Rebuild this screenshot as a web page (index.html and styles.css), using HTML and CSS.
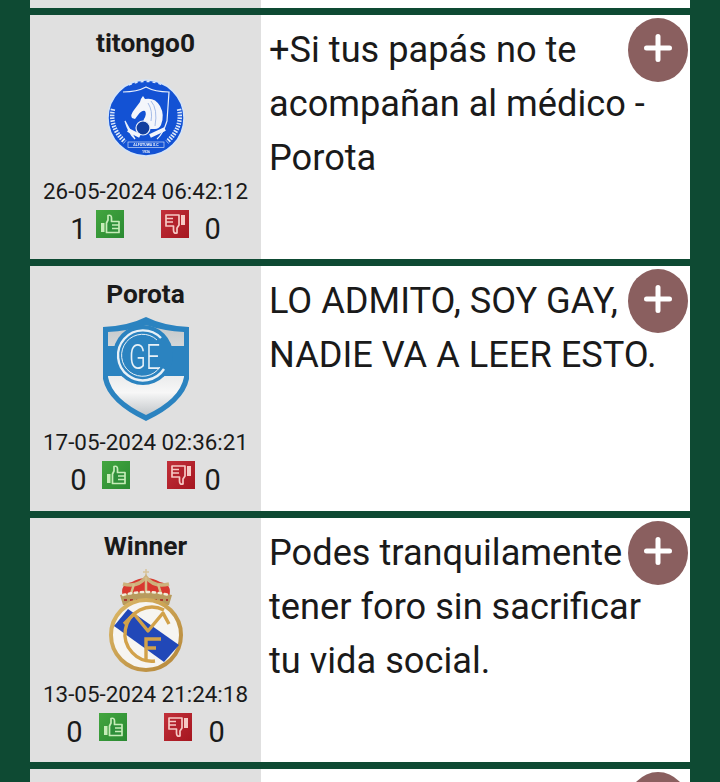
FILE: index.html
```html
<!DOCTYPE html>
<html lang="es">
<head>
    <meta charset="UTF-8">
    <meta name="viewport" content="width=device-width, initial-scale=1.0">
    <title>Foro</title>
    <link rel="stylesheet" href="styles.css">
</head>
<body>

    <!-- Shared icons -->
    <svg class="defs" width="0" height="0">
        <defs>
            <linearGradient id="green-bg" x1="0" y1="0" x2="1" y2="1">
                <stop offset="0" stop-color="#43a63f"/>
                <stop offset="1" stop-color="#2a8a32"/>
            </linearGradient>
            <linearGradient id="red-bg" x1="0" y1="0" x2="1" y2="1">
                <stop offset="0" stop-color="#c2303a"/>
                <stop offset="1" stop-color="#a5161f"/>
            </linearGradient>
            <linearGradient id="silver" x1="0" y1="0" x2="0" y2="1">
                <stop offset="0" stop-color="#c4c8ca"/>
                <stop offset="0.75" stop-color="#f7f7f7"/>
                <stop offset="1" stop-color="#c4c8cb"/>
            </linearGradient>
            <linearGradient id="gold" x1="0" y1="0" x2="1" y2="1">
                <stop offset="0" stop-color="#dcb867"/>
                <stop offset="1" stop-color="#b5873a"/>
            </linearGradient>
            <symbol id="thumb-up" viewBox="0 0 28 28">
                <rect width="28" height="28" fill="url(#green-bg)"/>
                <path d="M10.5 13 L12 10 V5.5 Q15.5 4.5 15.5 8 V11.5 H23 V22.5 H10.5 Z" fill="#2f8f3a" stroke="#c6ecb8" stroke-width="1.7" stroke-linejoin="round"/>
                <path d="M5 13 H8.5 V22 H5 Z" fill="#c6ecb8"/>
                <path d="M16 15 H23 M16 18.5 H23" stroke="#c6ecb8" stroke-width="1.4"/>
            </symbol>
            <symbol id="thumb-down" viewBox="0 0 28 28">
                <rect width="28" height="28" fill="url(#red-bg)"/>
                <path d="M5 5 H18 V15 L16 18 V23 Q12.5 24 12.5 20 V16 H5 Z" fill="#b3222c" stroke="#f6c9c4" stroke-width="1.7" stroke-linejoin="round"/>
                <path d="M20 5 H24 V15 H20 Z" fill="#f6c9c4"/>
                <path d="M5 8.5 H12 M5 12 H12" stroke="#f6c9c4" stroke-width="1.4"/>
            </symbol>
            <symbol id="plus" viewBox="0 0 28 28">
                <path d="M14 2.5 V25.5 M2.5 14 H25.5" stroke="#fff" stroke-width="5" stroke-linecap="round"/>
            </symbol>
        </defs>
    </svg>

    <div class="thread">

        <!-- Row cut off by the top of the screen -->
        <div class="post post-cut"><div class="author"></div><div class="body"></div></div>

        <div class="post">
            <div class="author">
                <div class="name">titongo0</div>
                <div class="crest">
                    <svg width="78" height="78" viewBox="0 0 78 78">
                        <circle cx="39" cy="39" r="38" fill="#1352d4" stroke="#d5e4f7" stroke-width="1.5"/>
                        <path d="M22 6 Q39 -1 56 6" fill="none" stroke="#dfe9fa" stroke-width="1.4" stroke-dasharray="3 3"/>
                        <path d="M16 13 Q30 13 39 8 Q48 13 62 13 L60 42 Q56 55 50 60 M28 60 Q22 55 18 42 Z" fill="none" stroke="#e9f0fb" stroke-width="1.2"/>
                        <path d="M25 39 Q23 36 27 31 L33 23 Q34 19 36 17 L38 20 Q48 18 53 27 Q58 36 54 46 Q52 50 48 50 L38 50 Q34 46 37 40 Q40 35 38 32 Q35 31 31 36 L28 40 Z" fill="#f4f6fb"/>
                        <path d="M44 22 Q51 30 48 47 M41 24 Q46 32 44 42" fill="none" stroke="#9db6e4" stroke-width="0.9"/>
                        <circle cx="36" cy="49" r="7" fill="#123f9f" stroke="#e9f0fb" stroke-width="1.2"/>
                        <path d="M21 51 L33 57 M58 50 L43 57" stroke="#f2f5fb" stroke-width="4"/>
                        <path d="M6 30 Q2 48 18 63 M72 30 Q76 48 60 63" fill="none" stroke="#dce8fa" stroke-width="4.5" stroke-dasharray="1.6 1.2"/>
                        <rect x="21" y="63" width="36" height="5.5" fill="#1352d4" stroke="#e9f0fb" stroke-width="0.6"/>
                        <text class="crest-small" x="39" y="67.4" text-anchor="middle">ALFOTUWA S.C</text>
                        <text class="crest-small" x="39" y="73.5" text-anchor="middle">1936</text>
                    </svg>
                </div>
                <div class="date">26-05-2024 06:42:12</div>
                <div class="votes votes-a">
                    <span class="count">1</span>
                    <svg class="vote-up" width="28" height="28"><use href="#thumb-up"/></svg>
                    <svg class="vote-down" width="28" height="28"><use href="#thumb-down"/></svg>
                    <span class="count">0</span>
                </div>
            </div>
            <div class="body">
                <button class="more"><svg width="28" height="28"><use href="#plus"/></svg></button>
                +Si tus papás no te acompañan al médico - Porota
            </div>
        </div>

        <div class="post">
            <div class="author">
                <div class="name">Porota</div>
                <div class="crest">
                    <svg width="88" height="104" viewBox="0 0 88 104">
                        <path d="M44 0 Q62 9 87 10 V62 Q82 86 44 104 Q6 86 1 62 V10 Q26 9 44 0 Z" fill="#2b83c0"/>
                        <path d="M44 8 Q62 14 82 15 V60 Q78 82 44 98 Q10 82 6 60 V15 Q26 14 44 8 Z" fill="url(#silver)"/>
                        <path d="M3 29 H85 V59 H3 Z" fill="#2b83c0"/>
                        <circle cx="41" cy="38" r="30" fill="#2b83c0"/>
                        <path d="M59 21 A25 25 0 1 0 62 52" fill="none" stroke="#e8f1f7" stroke-width="2.4"/>
                        <path d="M55 23 A21 21 0 1 0 58 50" fill="none" stroke="#e8f1f7" stroke-width="1"/>
                        <text class="crest-letter" x="27" y="52" textLength="31" lengthAdjust="spacingAndGlyphs">GE</text>
                    </svg>
                </div>
                <div class="date">17-05-2024 02:36:21</div>
                <div class="votes votes-b">
                    <span class="count">0</span>
                    <svg class="vote-up" width="28" height="28"><use href="#thumb-up"/></svg>
                    <svg class="vote-down" width="28" height="28"><use href="#thumb-down"/></svg>
                    <span class="count">0</span>
                </div>
            </div>
            <div class="body">
                <button class="more"><svg width="28" height="28"><use href="#plus"/></svg></button>
                LO ADMITO, SOY GAY, NADIE VA A LEER ESTO.
            </div>
        </div>

        <div class="post">
            <div class="author">
                <div class="name">Winner</div>
                <div class="crest">
                    <svg width="76" height="103" viewBox="0 0 76 103">
                        <path d="M38 0 V6 M35 3 H41" stroke="#d8c49a" stroke-width="1.5"/>
                        <path d="M15 28 Q11 15 24 13 Q38 5 52 13 Q65 15 61 28 Z" fill="#d8392f"/>
                        <path d="M15 15 Q30 19 38 8 Q46 19 61 15" fill="none" stroke="#cdb27c" stroke-width="3.5"/>
                        <path d="M38 8 V28 M26 15 L22 28 M50 15 L54 28" stroke="#d6bd88" stroke-width="2.5"/>
                        <path d="M12 26 Q38 20 64 26 L61 36 H15 Z" fill="#b89b5e"/>
                        <path d="M15 26 Q38 20 61 26" fill="none" stroke="#f1ead6" stroke-width="2.4" stroke-dasharray="2.4 3.6" stroke-linecap="round"/>
                        <path d="M16 31 H60" stroke="#a9382c" stroke-width="2" stroke-dasharray="3 3"/>
                        <circle cx="38" cy="66" r="35" fill="#f6f5f1" stroke="url(#gold)" stroke-width="4"/>
                        <path d="M20 40 L6 57 L56 93 L71 76 Z" fill="#2148b8"/>
                        <path d="M56 41 A27 27 0 1 0 47 92" fill="none" stroke="#d2a24a" stroke-width="3.4"/>
                        <path d="M16 55 L26 45 L40 62 L55 44 L61 55" fill="none" stroke="#d2a24a" stroke-width="3.4" stroke-linejoin="round"/>
                        <path d="M38 92 V70 H53 M38 79 H48" fill="none" stroke="#d2a24a" stroke-width="3.4"/>
                    </svg>
                </div>
                <div class="date">13-05-2024 21:24:18</div>
                <div class="votes votes-c">
                    <span class="count">0</span>
                    <svg class="vote-up" width="28" height="28"><use href="#thumb-up"/></svg>
                    <svg class="vote-down" width="28" height="28"><use href="#thumb-down"/></svg>
                    <span class="count">0</span>
                </div>
            </div>
            <div class="body">
                <button class="more"><svg width="28" height="28"><use href="#plus"/></svg></button>
                Podes tranquilamente tener foro sin sacrificar tu vida social.
            </div>
        </div>

        <!-- Row cut off by the bottom of the screen -->
        <div class="post">
            <div class="author"></div>
            <div class="body">
                <button class="more"><svg width="28" height="28"><use href="#plus"/></svg></button>
            </div>
        </div>

    </div>

</body>
</html>
```

FILE: styles.css
```css
/* Page */
html, body {
    margin: 0;
    height: 782px;
    overflow: hidden;
}

body {
    background: #0e4a33;
    font-family: Roboto, "Liberation Sans", sans-serif;
    color: #1a1a1a;
}

.defs {
    display: block;
}

/* Thread rows */
.thread {
    display: flex;
    flex-direction: column;
    gap: 7px;
    margin: 0 30px;
}

.post {
    display: grid;
    grid-template-columns: 231px 1fr;
    height: 244.33px;
    flex-shrink: 0;
}

.post-cut {
    height: 8px;
}

.post-cut .author,
.post-cut .body {
    padding: 0;
}

/* Left column */
.author {
    background: #e0e0e0;
    display: flex;
    flex-direction: column;
    align-items: center;
    padding-top: 12px;
    box-sizing: border-box;
}

.name {
    font-size: 26.3px;
    font-weight: bold;
    line-height: 32px;
}

.crest {
    display: flex;
    align-items: center;
    justify-content: center;
    height: 113px;
    margin-top: 2px;
}

.crest svg {
    display: block;
    filter: blur(0.4px);
}

.crest-small {
    font-size: 3.6px;
    font-weight: bold;
    fill: #eef3fb;
}

.crest-letter {
    font-size: 35px;
    font-weight: 300;
    fill: #e8f1f7;
}

.date {
    font-size: 22.4px;
    line-height: 30px;
    margin-top: 2px;
}

.votes {
    display: flex;
    align-items: center;
    margin-top: 4px;
    height: 28px;
}

.count {
    font-size: 29px;
    line-height: 28px;
    position: relative;
    top: 5px;
}

.vote-down {
    margin-left: 37px;
}

.votes-a .vote-up { margin-left: 9px; }
.votes-a .vote-down { margin-right: 16px; }
.votes-b .vote-up { margin-left: 15px; }
.votes-b .vote-down { margin-right: 10px; }
.votes-c .vote-up { margin-left: 16px; }
.votes-c .vote-down { margin-right: 17px; }

/* Right column */
.body {
    background: #fff;
    font-size: 36.2px;
    line-height: 54px;
    padding: 8px 14px 0 8px;
}

.more {
    float: right;
    display: flex;
    align-items: center;
    justify-content: center;
    width: 60px;
    height: 64px;
    margin: -5px -12px -5px 0;
    padding: 0 0 4px;
    border: none;
    border-radius: 50%;
    background: #8a5f5f;
}

.more svg {
    display: block;
}
```
